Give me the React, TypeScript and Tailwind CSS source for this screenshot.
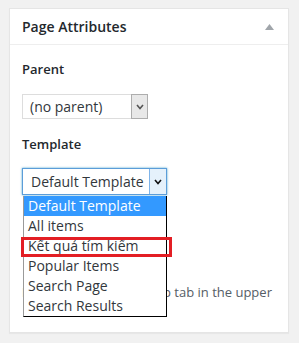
import React from "react";

const Chevron: React.FC<{ color: string }> = ({ color }) => (
  <svg width="8" height="6" viewBox="0 0 8 6">
    <polyline points="1,1 4,4.5 7,1" fill="none" stroke={color} strokeWidth="1.6" />
  </svg>
);

const templates = [
  "Default Template",
  "All items",
  "Kết quả tím kiếm",
  "Popular Items",
  "Search Page",
  "Search Results",
];

const App: React.FC = () => {
  return (
    <div className="w-[299px] h-[343px] bg-[#f1f1f1] pt-[8px] pl-[9px] font-['Open_Sans',sans-serif]">
      <div className="w-[280px] border border-[#e5e5e5] bg-white shadow-[0_1px_1px_rgba(0,0,0,0.04)]">
        <div className="h-[36px] border-b border-[#eeeeee] flex items-center justify-between pl-[12px] pr-[14px]">
          <h2 className="text-[14px] font-semibold text-[#23282d] leading-none">Page Attributes</h2>
          <svg width="9" height="6" viewBox="0 0 9 6">
            <polygon points="0,6 4.5,0 9,6" fill="#a0a5aa" />
          </svg>
        </div>

        <div className="px-[12px] pt-[14px] pb-[30px]">
          <p className="text-[13px] font-semibold text-[#23282d] leading-[20px]">Parent</p>
          <div className="mt-[15px] w-[126px] h-[25px] border border-[#dddddd] flex bg-white">
            <span className="flex-1 pl-[7px] text-[14px] leading-[23px] text-[#32373c]">(no parent)</span>
            <span className="w-[17px] h-[25px] -mt-px -mr-px border border-[#adadad] bg-[#e8e8e8] flex items-center justify-center">
              <Chevron color="#555555" />
            </span>
          </div>

          <p className="mt-[15px] text-[13px] font-semibold text-[#23282d] leading-[20px]">Template</p>
          <div className="relative mt-[14px]">
            <div className="w-[145px] h-[27px] border border-[#5b9dd9] shadow-[0_0_2px_rgba(30,140,190,0.8)] flex bg-white">
              <span className="flex-1 pl-[8px] text-[14px] leading-[25px] text-[#32373c]">Default Template</span>
              <span className="w-[17px] border-l border-[#7eb4ea] bg-[#e5f1fb] flex items-center justify-center">
                <Chevron color="#111111" />
              </span>
            </div>

            <ul className="absolute left-[1px] top-[28px] w-[144px] border border-black border-l-[#9a9a9a] border-t-0 bg-white z-10">
              {templates.map((t, i) => (
                <li
                  key={t}
                  className={
                    i === 0
                      ? "h-[20px] pl-[4px] text-[14px] leading-[20px] bg-[#3399ff] text-white whitespace-nowrap"
                      : "h-[20px] pl-[4px] text-[14px] leading-[20px] text-[#32373c] whitespace-nowrap"
                  }
                >
                  {t}
                </li>
              ))}
            </ul>

            <div className="absolute left-[-1px] top-[69px] w-[151px] h-[20px] border-[3px] border-[#e31e24] z-20" />
          </div>

          <p className="mt-[87px] text-[13px] leading-[20px] text-[#555d66] whitespace-nowrap">
            Need help? Use the Help tab in the upper
          </p>
        </div>
      </div>
    </div>
  );
};

export default App;
